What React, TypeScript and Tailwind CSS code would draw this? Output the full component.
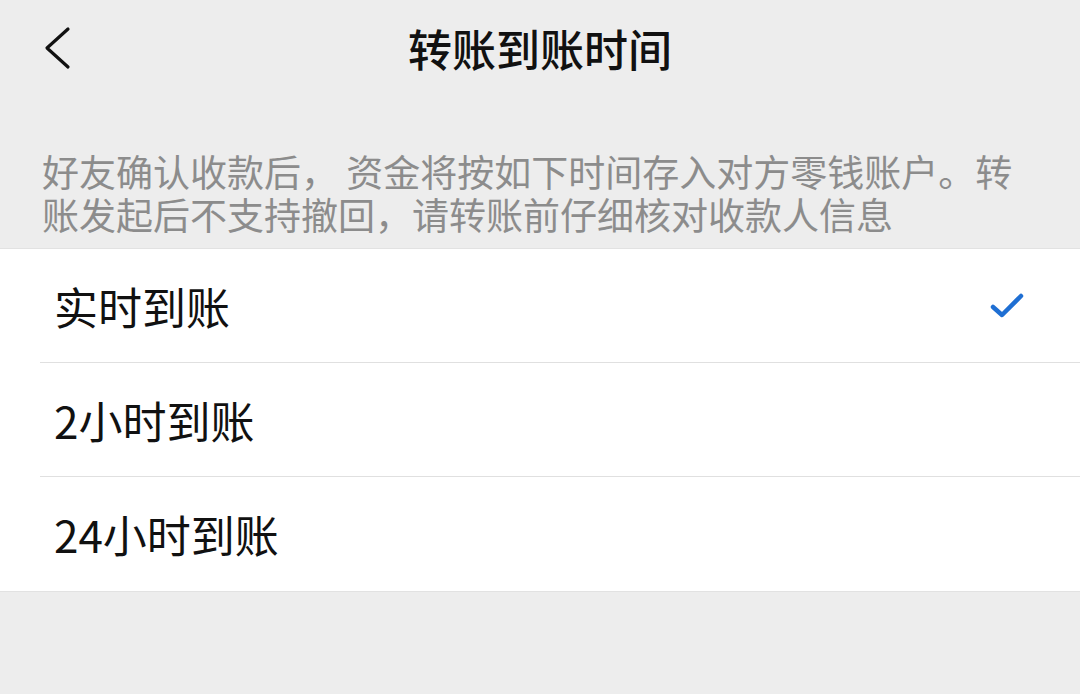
const options = [
  { label: "实时到账", checked: true },
  { label: "2小时到账", checked: false },
  { label: "24小时到账", checked: false },
];

export default function App() {
  return (
    <div
      className="w-[1080px] h-[694px] bg-[#ededed] overflow-hidden"
      style={{ fontFamily: '"Noto Sans CJK SC", "Noto Sans", sans-serif' }}
    >
      {/* 顶部导航 */}
      <header className="h-[96px] grid grid-cols-[1fr_auto_1fr] items-center">
        <div className="pl-[42px] flex items-center">
          <svg width="30" height="44" viewBox="0 0 30 44" fill="none">
            <path
              d="M26 3 L5 22 L26 41"
              stroke="#111"
              strokeWidth="3.2"
              strokeLinecap="round"
              strokeLinejoin="round"
            />
          </svg>
        </div>
        <h1 className="text-[44px] font-medium text-[#111] leading-none">转账到账时间</h1>
        <div />
      </header>

      <p className="pt-[54px] pb-[12px] px-[42px] text-[37px] leading-[43px] text-[#8c8c8c]">
        好友确认收款后， 资金将按如下时间存入对方零钱账户。转
        <br />
        账发起后不支持撤回，请转账前仔细核对收款人信息
      </p>

      <ul className="bg-white border-t border-b border-[#e2e2e2]">
        {options.map((opt, i) => (
          <li key={opt.label} className="pl-[40px]">
            <div
              className={`h-[114px] flex items-center justify-between pl-[14px] pr-[56px] ${
                i < options.length - 1 ? "border-b border-[#e0e0e0]" : ""
              }`}
            >
              <span className="text-[44px] text-[#111] leading-none">{opt.label}</span>
              {opt.checked && (
                <svg width="34" height="28" viewBox="0 0 34 28" fill="none">
                  <path
                    d="M3 15 L12 23 L31 4"
                    stroke="#1f6fd3"
                    strokeWidth="4.5"
                    strokeLinecap="round"
                    strokeLinejoin="round"
                  />
                </svg>
              )}
            </div>
          </li>
        ))}
      </ul>
    </div>
  );
}
